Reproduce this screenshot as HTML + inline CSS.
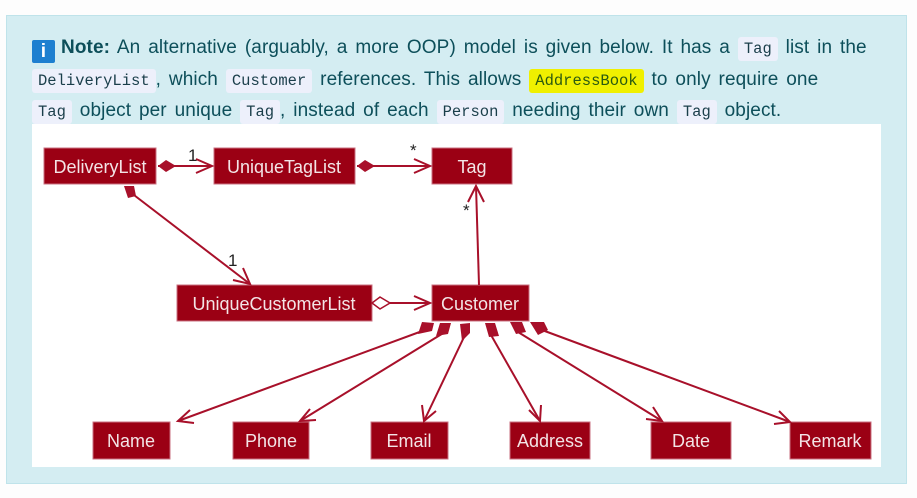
<!DOCTYPE html>
<html><head><meta charset="utf-8"><style>
body{margin:0;width:917px;height:498px;background:#fdfdfd;font-family:"Liberation Sans",sans-serif;overflow:hidden;position:relative}
.panel{position:absolute;left:6px;top:15px;width:899px;height:467px;background:#d4edf2;border:1px solid #bfe3ea}
.ln{position:absolute;left:32px;white-space:nowrap;font-size:19px;color:#0d4f5a;height:24px;line-height:24px;letter-spacing:0.1px;word-spacing:2.5px}
code{font-family:"Liberation Mono",monospace;font-size:15.5px;background:#edf0fb;color:#1a3e4a;padding:3px 6px;border-radius:3px;letter-spacing:0;word-spacing:0}
code.hl{background:#f0f000;color:#2a5a10}
.ico{display:inline-block;width:23px;height:23px;background:#1d7fd0;color:#fff;font-weight:bold;text-align:center;line-height:23px;border-radius:2px;vertical-align:-4px;margin-right:6px;font-size:19px}
.img{position:absolute;left:32px;top:124px;width:849px;height:343px;background:#fff}
</style></head><body>
<div class="panel"></div>
<div class="ln" style="top:36px"><span class="ico">i</span><b>Note:</b> An alternative (arguably, a more OOP) model is given below. It has a <code>Tag</code> list in the</div>
<div class="ln" style="top:68px"><code>DeliveryList</code>, which <code>Customer</code> references. This allows <code class="hl">AddressBook</code> to only require one</div>
<div class="ln" style="top:99px"><code>Tag</code> object per unique <code>Tag</code>, instead of each <code>Person</code> needing their own <code>Tag</code> object.</div>
<div class="img"></div>
<svg width="917" height="498" style="position:absolute;left:0;top:0" font-family="Liberation Sans, sans-serif" font-size="18">
<g fill="#9b0014" stroke="#c97080" stroke-width="1">
<rect x="44" y="148" width="112" height="36"/><rect x="214" y="148" width="141" height="36"/><rect x="432" y="148" width="80" height="36"/>
<rect x="177" y="285" width="195" height="36"/><rect x="432" y="285" width="97" height="36"/>
<rect x="93" y="422" width="77" height="37"/><rect x="233" y="422" width="76" height="37"/><rect x="371" y="422" width="77" height="37"/>
<rect x="510" y="422" width="80" height="37"/><rect x="651" y="422" width="80" height="37"/><rect x="790" y="422" width="81" height="37"/>
</g>
<g fill="#f3e4e6" text-anchor="middle">
<text x="100" y="173">DeliveryList</text><text x="284" y="173">UniqueTagList</text><text x="472" y="173">Tag</text>
<text x="274" y="310">UniqueCustomerList</text><text x="480" y="310">Customer</text>
<text x="131" y="447">Name</text><text x="271" y="447">Phone</text><text x="409" y="447">Email</text>
<text x="550" y="447">Address</text><text x="691" y="447">Date</text><text x="830" y="447">Remark</text>
</g>
<g stroke="#a8102a" stroke-width="2" fill="none">
<line x1="158" y1="166" x2="212" y2="166"/><polyline points="196,159 212,166 196,173"/>
<line x1="357" y1="166" x2="430" y2="166"/><polyline points="414,159 430,166 414,173"/>
<line x1="130" y1="192" x2="250" y2="284"/><polyline points="233,280 250,284 243,268"/>
<line x1="390" y1="303" x2="430" y2="303"/><polyline points="414,296 430,303 414,310"/>
<line x1="479" y1="285" x2="476" y2="186"/><polyline points="468,202 476,186 484,202"/>
<line x1="425" y1="330" x2="178" y2="421"/><polyline points="190,410 178,421 194,423"/>
<line x1="445" y1="332" x2="300" y2="421"/><polyline points="310,409 300,421 316,420"/>
<line x1="465" y1="335" x2="424" y2="421"/><polyline points="422,405 424,421 436,411"/>
<line x1="491" y1="335" x2="540" y2="421"/><polyline points="529,410 540,421 541,405"/>
<line x1="518" y1="332" x2="662" y2="421"/><polyline points="646,419 662,421 653,407"/>
<line x1="542" y1="330" x2="790" y2="422"/><polyline points="774,424 790,422 779,411"/>
</g>
<g fill="#a8102a">
<polygon points="158,166 166,160 176,166 166,172"/><polygon points="357,166 365,160 375,166 365,172"/>
<polygon points="124,186 134,186 136,196 128,198"/>
<polygon points="422,322 434,323 432,331 418,334"/><polygon points="440,323 451,323 448,334 436,336"/>
<polygon points="460,324 470,323 470,333 462,341"/><polygon points="485,323 495,323 499,336 489,337"/>
<polygon points="510,322 522,322 526,332 516,334"/><polygon points="530,322 544,322 548,330 538,335"/>
</g>
<polygon points="372,303 380,297 390,303 380,309" fill="#fff" stroke="#a8102a" stroke-width="1.5"/>
<g fill="#222" font-size="17"><text x="188" y="161">1</text><text x="410" y="156">*</text><text x="463" y="216">*</text><text x="228" y="266">1</text></g>
</svg>
</body></html>
